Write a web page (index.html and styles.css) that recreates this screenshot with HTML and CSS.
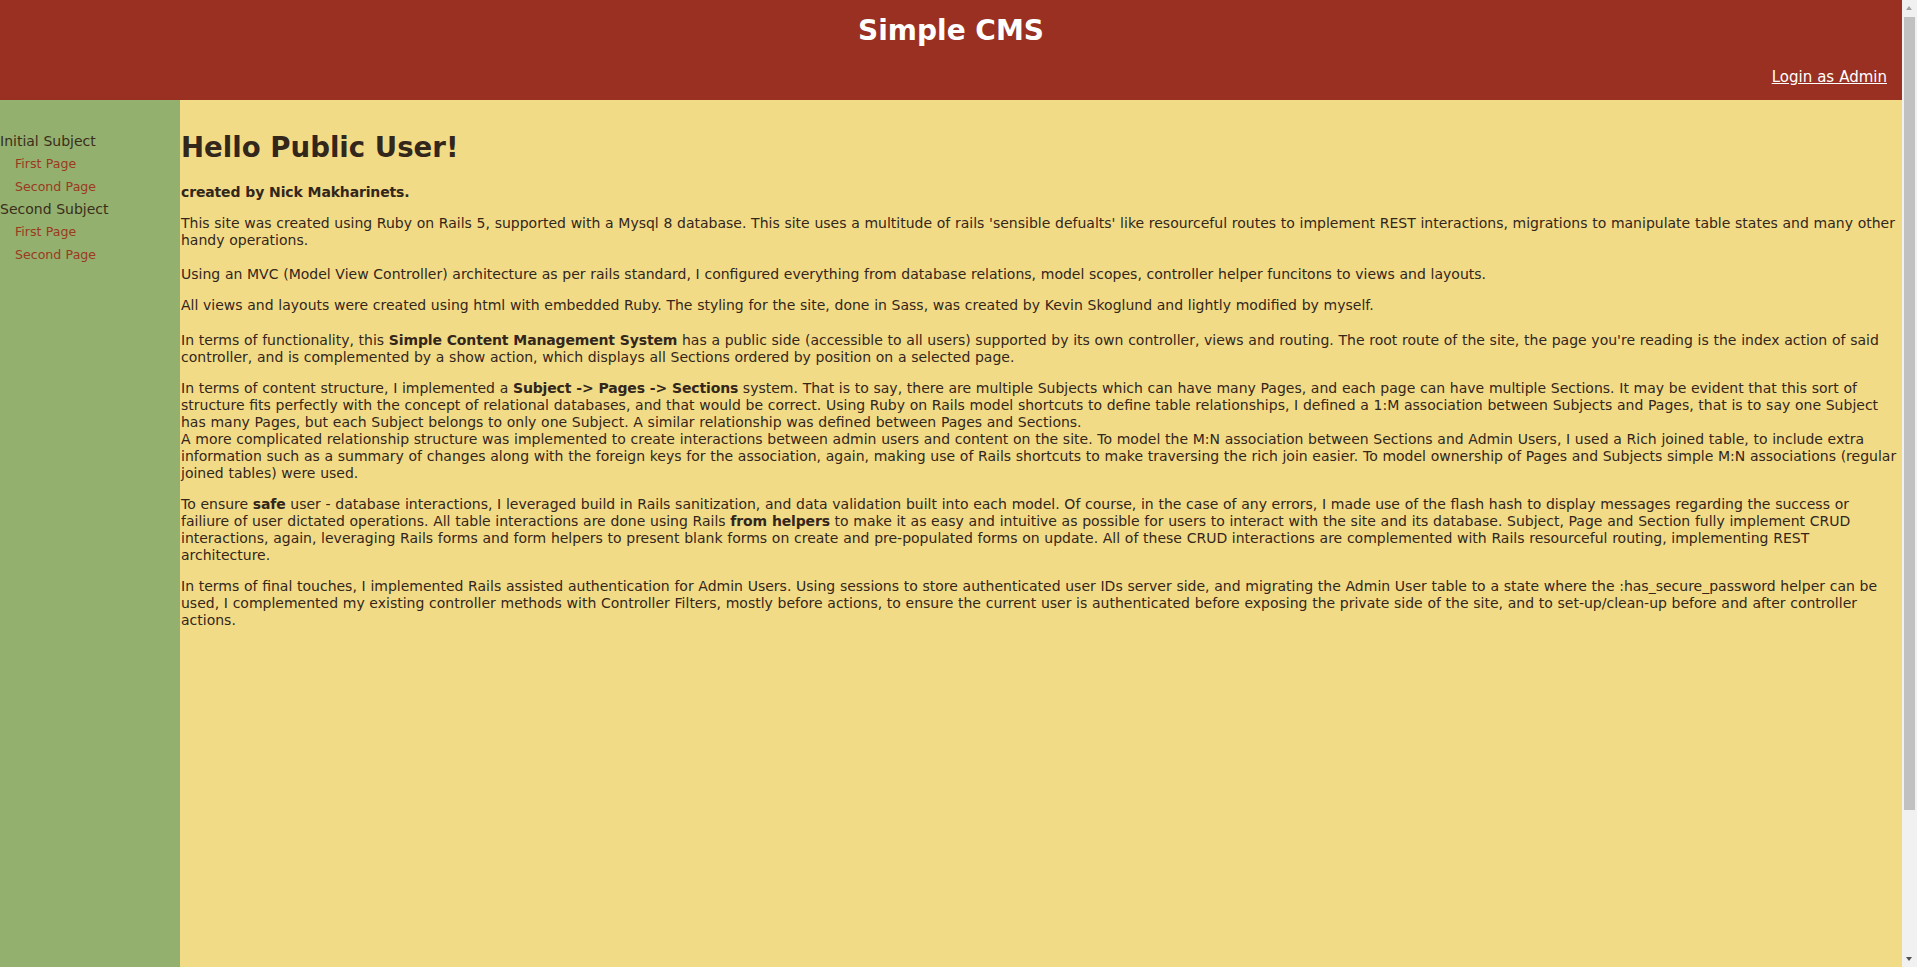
FILE: index.html
```html
<!DOCTYPE html>
<html>
<head>
<meta charset="utf-8">
<title>Simple CMS</title>
<link rel="stylesheet" href="styles.css">
</head>
<body>
<div class="page">
<header class="header">
  <h1 class="site-title">Simple CMS</h1>
  <div class="header-links"><a class="login" href="#">Login as Admin</a></div>
</header>
<div class="main">
  <nav class="sidebar">
    <ul class="subjects">
      <li class="subject">Initial Subject
        <ul class="pages">
          <li><a href="#">First Page</a></li>
          <li><a href="#">Second Page</a></li>
        </ul>
      </li>
      <li class="subject">Second Subject
        <ul class="pages">
          <li><a href="#">First Page</a></li>
          <li><a href="#">Second Page</a></li>
        </ul>
      </li>
    </ul>
  </nav>
  <section class="content">
    <h1 class="greeting">Hello Public User!</h1>
    <p><strong>created by Nick Makharinets.</strong></p>
    <p>This site was created using Ruby on Rails 5, supported with a Mysql 8 database. This site uses a multitude of rails 'sensible defualts' like resourceful routes to implement REST interactions, migrations to manipulate table states and many other handy operations.</p>
    <p class="spaced">Using an MVC (Model View Controller) architecture as per rails standard, I configured everything from database relations, model scopes, controller helper funcitons to views and layouts.</p>
    <p>All views and layouts were created using html with embedded Ruby. The styling for the site, done in Sass, was created by Kevin Skoglund and lightly modified by myself.</p>
    <p class="spaced">In terms of functionality, this <strong>Simple Content Management System</strong> has a public side (accessible to all users) supported by its own controller, views and routing. The root route of the site, the page you're reading is the index action of said controller, and is complemented by a show action, which displays all Sections ordered by position on a selected page.</p>
    <p>In terms of content structure, I implemented a <strong>Subject -&gt; Pages -&gt; Sections</strong> system. That is to say, there are multiple Subjects which can have many Pages, and each page can have multiple Sections. It may be evident that this sort of structure fits perfectly with the concept of relational databases, and that would be correct. Using Ruby on Rails model shortcuts to define table relationships, I defined a 1:M association between Subjects and Pages, that is to say one Subject has many Pages, but each Subject belongs to only one Subject. A similar relationship was defined between Pages and Sections.<br>A more complicated relationship structure was implemented to create interactions between admin users and content on the site. To model the M:N association between Sections and Admin Users, I used a Rich joined table, to include extra information such as a summary of changes along with the foreign keys for the association, again, making use of Rails shortcuts to make traversing the rich join easier. To model ownership of Pages and Subjects simple M:N associations (regular joined tables) were used.</p>
    <p>To ensure <strong>safe</strong> user - database interactions, I leveraged build in Rails sanitization, and data validation built into each model. Of course, in the case of any errors, I made use of the flash hash to display messages regarding the success or failiure of user dictated operations. All table interactions are done using Rails <strong>from helpers</strong> to make it as easy and intuitive as possible for users to interact with the site and its database. Subject, Page and Section fully implement CRUD interactions, again, leveraging Rails forms and form helpers to present blank forms on create and pre-populated forms on update. All of these CRUD interactions are complemented with Rails resourceful routing, implementing REST architecture.</p>
    <p>In terms of final touches, I implemented Rails assisted authentication for Admin Users. Using sessions to store authenticated user IDs server side, and migrating the Admin User table to a state where the :has_secure_password helper can be used, I complemented my existing controller methods with Controller Filters, mostly before actions, to ensure the current user is authenticated before exposing the private side of the site, and to set-up/clean-up before and after controller actions.</p>
  </section>
</div>
</div>
<div class="scrollbar" aria-hidden="true">
  <div class="sb-arrow sb-up"></div>
  <div class="sb-thumb"></div>
  <div class="sb-track"></div>
  <div class="sb-arrow sb-down"></div>
</div>
</body>
</html>
```
FILE: styles.css
```css
html, body {
  margin: 0;
  padding: 0;
}

body {
  font-family: "DejaVu Sans", Verdana, sans-serif;
  font-size: 14px;
  line-height: 17px;
  word-spacing: 0.25px;
  color: #33261a;
  background: #f2db87;
}

.page {
  margin-right: 15px;
}

.header {
  height: 100px;
  box-sizing: border-box;
  background: #993022;
  color: #ffffff;
  padding-top: 14px;
  display: flex;
  flex-direction: column;
}

.site-title {
  margin: 0;
  font-size: 28px;
  line-height: 34px;
  text-align: center;
  font-weight: bold;
  word-spacing: 0;
}

.header-links {
  display: flex;
  justify-content: flex-end;
  padding: 21px 15px 0 0;
}

.login {
  color: #ffffff;
  font-size: 15px;
  line-height: 17px;
  text-decoration: underline;
}

.main {
  display: grid;
  grid-template-columns: 180px 1fr;
  min-height: 1038px;
}

.sidebar {
  background: #93b06f;
  padding-top: 30px;
}

.subjects {
  list-style: none;
  margin: 0;
  padding: 0;
}

.subject {
  font-size: 14px;
  line-height: 23px;
  color: #3a2e1a;
}

.pages {
  list-style: none;
  margin: 0;
  padding: 0 0 0 15px;
}

.pages li {
  font-size: 12.6px;
  line-height: 22.6px;
}

.pages a {
  color: #9b3a1e;
  text-decoration: none;
}

.content {
  padding: 12px 5.5px 0 1px;
}

.greeting {
  font-size: 27.6px;
  line-height: 34px;
  margin: 18.76px 0;
  word-spacing: 0;
}

.content p {
  margin: 14px 0;
}

.content p.spaced {
  margin-top: 17.5px;
}

.content strong {
  letter-spacing: -0.15px;
}

.scrollbar {
  position: fixed;
  top: 0;
  right: 0;
  bottom: 0;
  width: 15px;
  background: #f1f1f1;
  display: flex;
  flex-direction: column;
}

.sb-arrow {
  height: 17px;
  flex: none;
  position: relative;
}

.sb-up::after,
.sb-down::after {
  content: "";
  position: absolute;
  left: 4px;
  width: 0;
  height: 0;
  border-left: 3.5px solid transparent;
  border-right: 3.5px solid transparent;
}

.sb-up::after {
  top: 6px;
  border-bottom: 4px solid #a3a3a3;
}

.sb-down::after {
  bottom: 6px;
  border-top: 4px solid #505050;
}

.sb-thumb {
  height: 793px;
  margin: 0 2px;
  background: #c1c1c1;
  flex: none;
}

.sb-track {
  flex: 1;
}
```
